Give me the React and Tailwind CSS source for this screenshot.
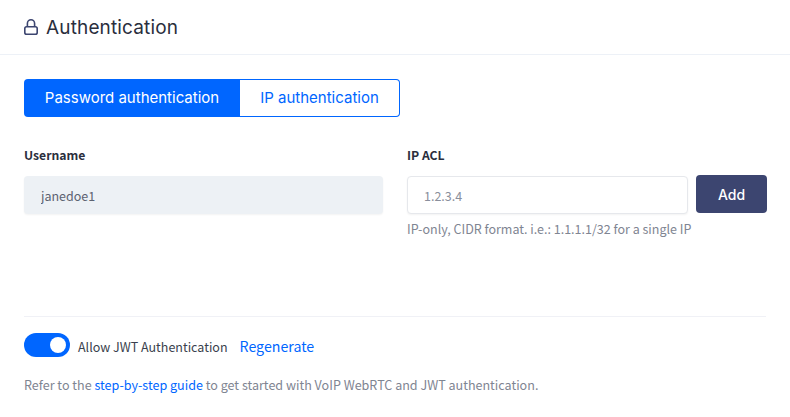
import React, { useState } from 'react';

const bodyFont = "font-['Noto_Sans_CJK_SC','Noto_Sans',sans-serif]";
const headFont = "font-['Inter','Noto_Sans',sans-serif]";

const LockIcon = () => (
    <svg width="14" height="16" viewBox="0 0 14 16" fill="none" stroke="#3c4570" strokeWidth="1.6" className="shrink-0">
        <rect x="0.8" y="7.8" width="12.4" height="7.4" rx="1.8" />
        <path d="M3.4 7.8V4.4a3.6 3.6 0 0 1 7.2 0v3.4" />
    </svg>
);

const App = () => {
    const [tab, setTab] = useState('password');

    return (
        <div className={`${bodyFont} w-[790px] h-[417px] bg-white overflow-hidden`}>
            <div className="h-[55px] border-b border-[#edf1f7] pl-6 flex items-center gap-2">
                <LockIcon />
                <h2 className={`${headFont} text-[19px] tracking-[0.15px] text-[#2a2e3d] leading-none`}>Authentication</h2>
            </div>

            <div className="px-6 pt-6">
                <div className={`${headFont} flex w-[376px] h-[38px] text-[15px]`}>
                    <button
                        type="button"
                        onClick={() => setTab('password')}
                        className="w-[216px] rounded-l bg-[#0066ff] text-white"
                    >
                        Password authentication
                    </button>
                    <button
                        type="button"
                        onClick={() => setTab('ip')}
                        className="flex-1 rounded-r border border-l-0 border-[#0066ff] text-[#0066ff]"
                    >
                        IP authentication
                    </button>
                </div>

                <div className="flex gap-6 mt-[28px]">
                    <div className="w-[359px] shrink-0">
                        <label className="block text-[12.2px] leading-[20px] font-semibold text-[#2a2e3d]">Username</label>
                        <input
                            readOnly
                            value="janedoe1"
                            className="block mt-[11px] w-full h-[38px] rounded bg-[#edf1f5] px-[17px] text-[12.5px] text-[#5c6270] outline-none shadow-[0_1px_2px_rgba(0,0,0,0.05)]"
                        />
                    </div>
                    <div className="w-[360px] shrink-0">
                        <label className="block text-[12.2px] leading-[20px] font-semibold text-[#2a2e3d]">IP ACL</label>
                        <div className="flex gap-2 mt-[10px]">
                            <input
                                placeholder="1.2.3.4"
                                className="block mt-px w-[281px] h-[38px] rounded border border-[#e6e8ec] bg-white px-4 text-[12.5px] outline-none placeholder:text-[#8a8f9c] shadow-[0_1px_2px_rgba(0,0,0,0.05)]"
                            />
                            <button type="button" className={`${headFont} w-[71px] h-[38px] rounded bg-[#3c4570] text-white text-[14px] font-medium`}>
                                Add
                            </button>
                        </div>
                        <p className="mt-[5px] text-[12.5px] leading-[20px] text-[#7f8592]">
                            IP-only, CIDR format. i.e.: 1.1.1.1/32 for a single IP
                        </p>
                    </div>
                </div>

                <div className="mt-[77px] border-t border-[#f0f1f6] pt-4">
                    <div className="flex items-center h-6">
                        <span className="flex items-center justify-end w-[46px] h-6 rounded-full bg-[#0066ff] pr-1">
                            <span className="w-4 h-4 rounded-full bg-white" />
                        </span>
                        <span className="ml-2 pt-1 text-[12.5px] text-[#3a3f4d]">Allow JWT Authentication</span>
                        <a href="#" className="ml-3 pt-[3px] text-[14.2px] text-[#0066ff]">Regenerate</a>
                    </div>
                    <p className="mt-[18px] text-[12.55px] leading-[20px] text-[#7f8592]">
                        Refer to the <a href="#" className="text-[#0066ff]">step-by-step guide</a> to get started with VoIP WebRTC and JWT authentication.
                    </p>
                </div>
            </div>
        </div>
    );
};

export default App;
